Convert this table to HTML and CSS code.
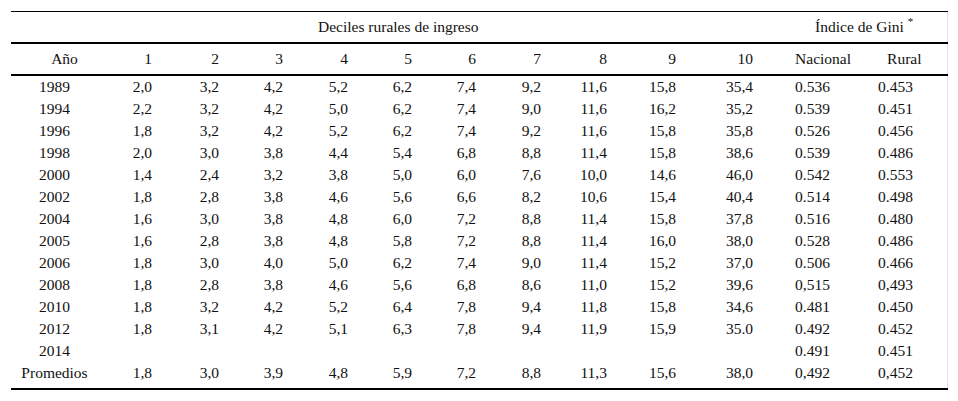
FILE: index.html
```html
<!DOCTYPE html>
<html lang="es">
<head>
<meta charset="utf-8">
<link rel="stylesheet" href="styles.css">
</head>
<body>
<div class="frame">
<table class="data">
<colgroup>
<col class="c-year"><col class="c1"><col class="c2"><col class="c3"><col class="c4"><col class="c5"><col class="c6"><col class="c7"><col class="c8"><col class="c9"><col class="c10"><col class="c-nac"><col class="c-rur">
</colgroup>
<thead>
<tr class="group">
<th></th>
<th colspan="10" class="deciles">Deciles rurales de ingreso</th>
<th colspan="2" class="gini">Índice de Gini <sup>*</sup></th>
</tr>
<tr class="cols">
<th class="year">Año</th>
<th>1</th><th>2</th><th>3</th><th>4</th><th>5</th><th>6</th><th>7</th><th>8</th><th>9</th><th>10</th>
<th class="nac">Nacional</th><th class="rur">Rural</th>
</tr>
</thead>
<tbody>
<tr><td class="year">1989</td><td>2,0</td><td>3,2</td><td>4,2</td><td>5,2</td><td>6,2</td><td>7,4</td><td>9,2</td><td>11,6</td><td>15,8</td><td>35,4</td><td class="nac">0.536</td><td class="rur">0.453</td></tr>
<tr><td class="year">1994</td><td>2,2</td><td>3,2</td><td>4,2</td><td>5,0</td><td>6,2</td><td>7,4</td><td>9,0</td><td>11,6</td><td>16,2</td><td>35,2</td><td class="nac">0.539</td><td class="rur">0.451</td></tr>
<tr><td class="year">1996</td><td>1,8</td><td>3,2</td><td>4,2</td><td>5,2</td><td>6,2</td><td>7,4</td><td>9,2</td><td>11,6</td><td>15,8</td><td>35,8</td><td class="nac">0.526</td><td class="rur">0.456</td></tr>
<tr><td class="year">1998</td><td>2,0</td><td>3,0</td><td>3,8</td><td>4,4</td><td>5,4</td><td>6,8</td><td>8,8</td><td>11,4</td><td>15,8</td><td>38,6</td><td class="nac">0.539</td><td class="rur">0.486</td></tr>
<tr><td class="year">2000</td><td>1,4</td><td>2,4</td><td>3,2</td><td>3,8</td><td>5,0</td><td>6,0</td><td>7,6</td><td>10,0</td><td>14,6</td><td>46,0</td><td class="nac">0.542</td><td class="rur">0.553</td></tr>
<tr><td class="year">2002</td><td>1,8</td><td>2,8</td><td>3,8</td><td>4,6</td><td>5,6</td><td>6,6</td><td>8,2</td><td>10,6</td><td>15,4</td><td>40,4</td><td class="nac">0.514</td><td class="rur">0.498</td></tr>
<tr><td class="year">2004</td><td>1,6</td><td>3,0</td><td>3,8</td><td>4,8</td><td>6,0</td><td>7,2</td><td>8,8</td><td>11,4</td><td>15,8</td><td>37,8</td><td class="nac">0.516</td><td class="rur">0.480</td></tr>
<tr><td class="year">2005</td><td>1,6</td><td>2,8</td><td>3,8</td><td>4,8</td><td>5,8</td><td>7,2</td><td>8,8</td><td>11,4</td><td>16,0</td><td>38,0</td><td class="nac">0.528</td><td class="rur">0.486</td></tr>
<tr><td class="year">2006</td><td>1,8</td><td>3,0</td><td>4,0</td><td>5,0</td><td>6,2</td><td>7,4</td><td>9,0</td><td>11,4</td><td>15,2</td><td>37,0</td><td class="nac">0.506</td><td class="rur">0.466</td></tr>
<tr><td class="year">2008</td><td>1,8</td><td>2,8</td><td>3,8</td><td>4,6</td><td>5,6</td><td>6,8</td><td>8,6</td><td>11,0</td><td>15,2</td><td>39,6</td><td class="nac">0,515</td><td class="rur">0,493</td></tr>
<tr><td class="year">2010</td><td>1,8</td><td>3,2</td><td>4,2</td><td>5,2</td><td>6,4</td><td>7,8</td><td>9,4</td><td>11,8</td><td>15,8</td><td>34,6</td><td class="nac">0.481</td><td class="rur">0.450</td></tr>
<tr><td class="year">2012</td><td>1,8</td><td>3,1</td><td>4,2</td><td>5,1</td><td>6,3</td><td>7,8</td><td>9,4</td><td>11,9</td><td>15,9</td><td>35.0</td><td class="nac">0.492</td><td class="rur">0.452</td></tr>
<tr><td class="year">2014</td><td></td><td></td><td></td><td></td><td></td><td></td><td></td><td></td><td></td><td></td><td class="nac">0.491</td><td class="rur">0.451</td></tr>
<tr class="last"><td class="year">Promedios</td><td>1,8</td><td>3,0</td><td>3,9</td><td>4,8</td><td>5,9</td><td>7,2</td><td>8,8</td><td>11,3</td><td>15,6</td><td>38,0</td><td class="nac">0,492</td><td class="rur">0,452</td></tr>
</tbody>
</table>
</div>
</body>
</html>
```
FILE: styles.css
```css
html, body {
  margin: 0;
  padding: 0;
  background: #ffffff;
}

body {
  font-family: "Liberation Serif", "Times New Roman", serif;
  font-size: 15.5px;
  color: #111111;
}

.frame {
  margin: 11px 0 0 11px;
  width: 936px;
  border-right: 1px solid #e4e4e4;
}

.data {
  width: 936px;
  table-layout: fixed;
  border-collapse: collapse;
  border-top: 1px solid #000;
  border-bottom: 2px solid #000;
}

.c-year { width: 87px; }
.c1 { width: 54px; }
.c2 { width: 67px; }
.c3 { width: 64px; }
.c4 { width: 65px; }
.c5 { width: 64px; }
.c6 { width: 64px; }
.c7 { width: 65px; }
.c8 { width: 66px; }
.c9 { width: 69px; }
.c10 { width: 77px; }
.c-nac { width: 117px; }
.c-rur { width: 78px; }

.data th,
.data td {
  padding: 0;
  font-weight: normal;
  text-align: right;
  white-space: nowrap;
  line-height: 22px;
}

.group th {
  height: 30px;
  line-height: 30px;
  border-bottom: 2px solid #000;
  text-align: left;
}

.group .deciles {
  padding-left: 220px;
}

.group .gini {
  padding-left: 62px;
}

.gini sup {
  font-size: 11px;
  vertical-align: 7px;
  line-height: 0;
}

.cols th {
  height: 30px;
  line-height: 30px;
  border-bottom: 2px solid #000;
}

.cols .year {
  text-align: center;
  padding-left: 20px;
}

.data .year {
  text-align: center;
}

.data .nac {
  text-align: left;
  padding-left: 42px;
}

.data .rur {
  text-align: left;
  padding-left: 8px;
}

.cols .rur {
  padding-left: 17px;
}

.data td {
  height: 22px;
}

.last td {
  padding-bottom: 4px;
}
```
